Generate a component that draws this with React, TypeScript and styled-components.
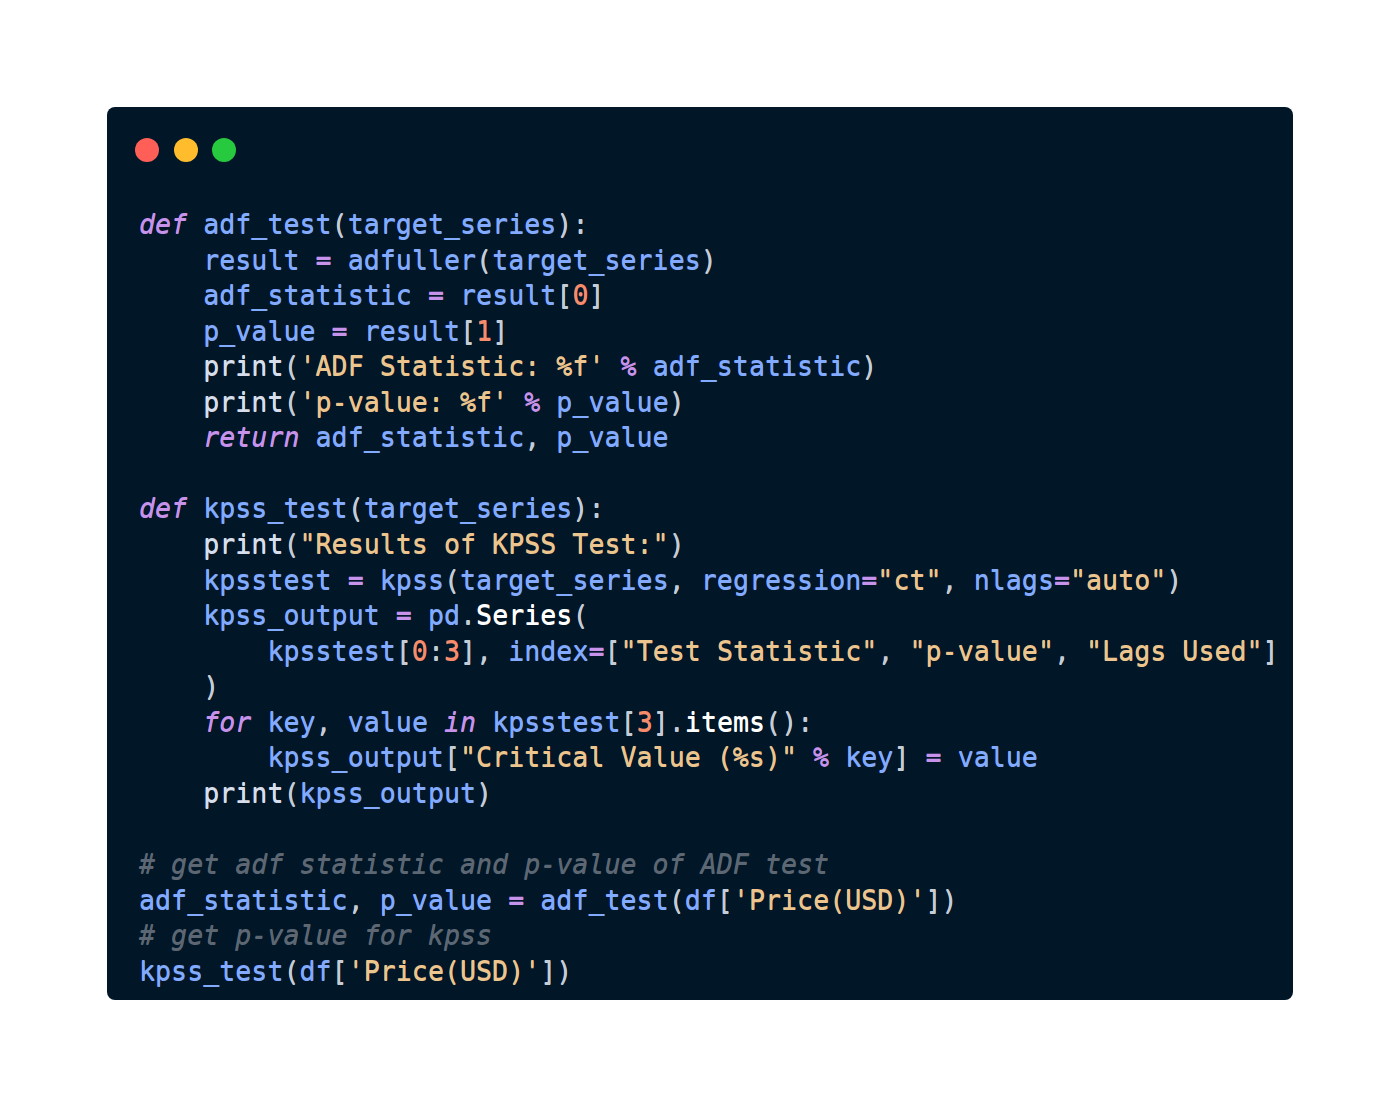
import React from "react";
import styled, { createGlobalStyle } from "styled-components";

const Global = createGlobalStyle`
  html, body { margin: 0; padding: 0; background: #ffffff; }
  #root { min-height: 1107px; }
`;

const Page = styled.main`
  display: flex;
  justify-content: center;
  padding-top: 107px;
  height: 1107px;
  box-sizing: border-box;
  background: #ffffff;
`;

const Card = styled.section`
  width: 1186px;
  height: 893px;
  box-sizing: border-box;
  background: #011627;
  border-radius: 8px;
  overflow: hidden;
  padding: 31px 0 0 28px;
  display: flex;
  flex-direction: column;
`;

const TitleBar = styled.div`
  display: flex;
  gap: 14.5px;
  height: 24px;
`;

const Dot = styled.span<{ $color: string }>`
  width: 24px;
  height: 24px;
  border-radius: 50%;
  background: ${(p) => p.$color};
`;

const Code = styled.pre`
  margin: 44px 0 0 4px;
  font-family: "DejaVu Sans Mono", "Liberation Mono", monospace;
  font-size: 26.67px;
  line-height: 35.56px;
  color: #d6deeb;
  white-space: pre;
  text-shadow: 0 0.5px 0 currentColor;
`;

const Line = styled.div`
  min-height: 35.56px;
`;

type Kind = "kw" | "fn" | "op" | "num" | "str" | "punc" | "builtin" | "method" | "comment" | "plain";

const colors: Record<Kind, string> = {
  kw: "#c792ea",
  fn: "#82aaff",
  op: "#c792ea",
  num: "#f78c6c",
  str: "#ecc48d",
  punc: "#c5ccd6",
  builtin: "#d6deeb",
  method: "#ffffff",
  comment: "#5c6773",
  plain: "#d6deeb",
};

const Tok = styled.span<{ $kind: Kind }>`
  color: ${(p) => colors[p.$kind]};
  font-style: ${(p) => (p.$kind === "kw" || p.$kind === "comment" ? "italic" : "normal")};
`;

const source = `def adf_test(target_series):
    result = adfuller(target_series)
    adf_statistic = result[0]
    p_value = result[1]
    print('ADF Statistic: %f' % adf_statistic)
    print('p-value: %f' % p_value)
    return adf_statistic, p_value

def kpss_test(target_series):
    print("Results of KPSS Test:")
    kpsstest = kpss(target_series, regression="ct", nlags="auto")
    kpss_output = pd.Series(
        kpsstest[0:3], index=["Test Statistic", "p-value", "Lags Used"]
    )
    for key, value in kpsstest[3].items():
        kpss_output["Critical Value (%s)" % key] = value
    print(kpss_output)

# get adf statistic and p-value of ADF test
adf_statistic, p_value = adf_test(df['Price(USD)'])
# get p-value for kpss
kpss_test(df['Price(USD)'])`;

const keywords = new Set(["def", "return", "for", "in"]);

function tokenize(line: string): [Kind, string][] {
  const out: [Kind, string][] = [];
  let rest = line;
  let prev = "";
  while (rest.length) {
    let m: RegExpMatchArray | null;
    let tok: [Kind, string];
    if ((m = rest.match(/^#.*/))) {
      tok = ["comment", m[0]];
    } else if ((m = rest.match(/^(['"]).*?\1/))) {
      tok = ["str", m[0]];
    } else if ((m = rest.match(/^\d+/))) {
      tok = ["num", m[0]];
    } else if ((m = rest.match(/^[A-Za-z_]\w*/))) {
      const w = m[0];
      let k: Kind = "fn";
      if (keywords.has(w)) k = "kw";
      else if (w === "print") k = "builtin";
      else if (prev === ".") k = "method";
      tok = [k, w];
    } else if ((m = rest.match(/^[=%]/))) {
      tok = ["op", m[0]];
    } else if ((m = rest.match(/^\s+/))) {
      tok = ["plain", m[0]];
    } else {
      tok = ["punc", rest[0]];
    }
    out.push(tok);
    const t = tok[1];
    if (!/^\s+$/.test(t)) prev = t;
    rest = rest.slice(t.length);
  }
  return out;
}

export default function App() {
  const lines = source.split("\n");
  return (
    <>
      <Global />
      <Page>
        <Card>
          <TitleBar>
            <Dot $color="#ff5f56" />
            <Dot $color="#ffbd2e" />
            <Dot $color="#27c93f" />
          </TitleBar>
          <Code>
            {lines.map((l, i) => (
              <Line key={i}>
                {tokenize(l).map(([k, t], j) => (
                  <Tok key={j} $kind={k}>
                    {t}
                  </Tok>
                ))}
              </Line>
            ))}
          </Code>
        </Card>
      </Page>
    </>
  );
}
